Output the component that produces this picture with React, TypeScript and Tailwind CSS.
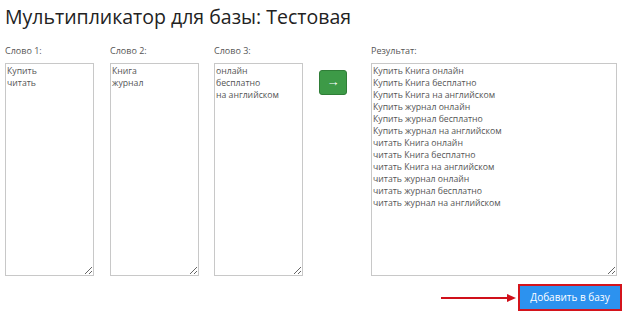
import React from 'react';

const words1 = 'Купить\nчитать';
const words2 = 'Книга\nжурнал';
const words3 = 'онлайн\nбесплатно\nна английском';

const result = [
  'Купить Книга онлайн',
  'Купить Книга бесплатно',
  'Купить Книга на английском',
  'Купить журнал онлайн',
  'Купить журнал бесплатно',
  'Купить журнал на английском',
  'читать Книга онлайн',
  'читать Книга бесплатно',
  'читать Книга на английском',
  'читать журнал онлайн',
  'читать журнал бесплатно',
  'читать журнал на английском',
].join('\n');

const areaCls =
  'block h-[213px] resize border border-[#c8c8c8] bg-white px-[1px] pt-[1px] pb-0 text-[8.7px] leading-[12px] text-[#555] outline-none';

function Column({ label, value, width }: { label: string; value: string; width: string }) {
  return (
    <div className="flex flex-col">
      <label className="mb-[6px] h-[12px] text-[9px] leading-[12px] text-[#555]">{label}</label>
      <textarea readOnly value={value} className={`${areaCls} ${width}`} />
    </div>
  );
}

export default function App() {
  return (
    <div
      className="h-[313px] w-[626px] overflow-hidden bg-white pl-[5px] pt-[3px]"
      style={{ fontFamily: '"Open Sans", "Noto Sans", sans-serif' }}
    >
      <h1 className="text-[19.5px] leading-[28px] text-[#222]">Мультипликатор для базы: Тестовая</h1>
      <div className="mt-[14px] flex">
        <Column label="Слово 1:" value={words1} width="w-[89px]" />
        <div className="ml-[16px]">
          <Column label="Слово 2:" value={words2} width="w-[89px]" />
        </div>
        <div className="ml-[15px]">
          <Column label="Слово 3:" value={words3} width="w-[89px]" />
        </div>
        <div className="ml-[16px] pt-[25px]">
          <button
            type="button"
            className="grid h-[25px] w-[28px] place-items-center rounded-[3px] border border-[#2f7d37] bg-[#3d9a47] pb-[2px] text-[13px] leading-none text-white"
          >
            →
          </button>
        </div>
        <div className="ml-[24px]">
          <Column label="Результат:" value={result} width="w-[246px]" />
        </div>
      </div>
      <div className="mt-[8px] flex items-center justify-end pr-[4px]">
        <svg width="76" height="8" viewBox="0 0 76 8" className="mr-[1px]">
          <line x1="0" y1="4" x2="68" y2="4" stroke="#d0101a" strokeWidth="2" />
          <polygon points="66,0 75,4 66,8" fill="#d0101a" />
        </svg>
        <div className="border-2 border-[#d4141c] p-0">
          <button
            type="button"
            className="block h-[23px] w-[100px] bg-[#2c92ef] text-[10px] leading-[23px] text-white"
          >
            Добавить в базу
          </button>
        </div>
      </div>
    </div>
  );
}
